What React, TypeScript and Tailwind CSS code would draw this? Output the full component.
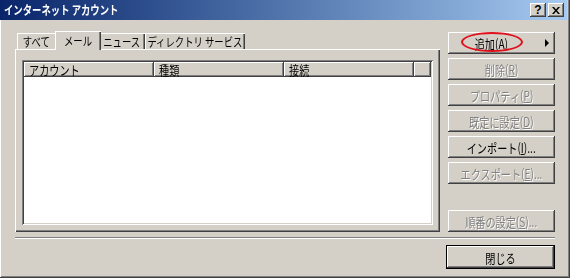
import React from "react";

const raised =
  "shadow-[inset_-1px_-1px_#404040,inset_1px_1px_#ffffff,inset_-2px_-2px_#808080,inset_2px_2px_#d4d0c8]";
const font = "[font-family:'Noto_Sans_CJK_JP','Noto_Sans',sans-serif]";

function N({ children, left }: { children: React.ReactNode; left?: boolean }) {
  return (
    <span
      className={`inline-block whitespace-nowrap scale-x-[0.78] ${left ? "origin-left" : "origin-center"}`}
    >
      {children}
    </span>
  );
}

function U({ c }: { c: string }) {
  return <span className="underline underline-offset-1">{c}</span>;
}

function Btn({
  children,
  disabled,
  className = "",
}: {
  children: React.ReactNode;
  disabled?: boolean;
  className?: string;
}) {
  return (
    <div
      className={`relative flex h-[22px] w-[107px] items-center justify-center bg-[#d4d0c8] text-[13px] leading-none ${raised} ${
        disabled ? "text-[#808080] [text-shadow:1px_1px_0_#ffffff]" : "text-black"
      } ${className}`}
    >
      {children}
    </div>
  );
}

function Tab({ label, w, selected }: { label: string; w: number; selected?: boolean }) {
  if (selected) {
    return (
      <div
        className="relative z-10 -mx-[2px] -mb-px flex h-[19px] items-start justify-center bg-[#d4d0c8] pt-[2px] text-[12px] leading-[15px] shadow-[inset_1px_1px_#ffffff,inset_-1px_0_#404040,inset_-2px_0_#808080]"
        style={{ width: w + 4 }}
      >
        <N>{label}</N>
      </div>
    );
  }
  return (
    <div
      className="flex h-[16px] items-start justify-center bg-[#d4d0c8] pr-[1px] pt-[1px] text-[12px] leading-[15px] shadow-[inset_1px_1px_#ffffff,inset_-1px_0_#404040,inset_-2px_0_#808080]"
      style={{ width: w }}
    >
      <N>{label}</N>
    </div>
  );
}

function HeaderCell({ label, w }: { label?: string; w?: number }) {
  return (
    <div
      className={`flex h-full items-center pl-[5px] text-[13px] leading-[13px] ${raised} ${w ? "" : "flex-1"}`}
      style={w ? { width: w } : undefined}
    >
      {label ? <N left>{label}</N> : null}
    </div>
  );
}

export default function App() {
  return (
    <div
      className={`relative h-[278px] w-[570px] overflow-hidden bg-[#d4d0c8] text-black ${font} shadow-[inset_-1px_-1px_#404040,inset_1px_0_#ffffff,inset_-2px_-2px_#808080]`}
    >
      {/* Title bar */}
      <div className="mr-[3px] flex h-[20px] items-center bg-gradient-to-r from-[#0a246a] to-[#a6caf0] pl-[4px] pr-[3px]">
        <span className="text-[12px] font-bold leading-none text-white">
          <N left>インターネット アカウント</N>
        </span>
        <div className="ml-auto flex gap-[2px]">
          <div className={`flex h-[14px] w-[16px] items-center justify-center bg-[#d4d0c8] ${raised}`}>
            <span className="text-[12px] font-bold leading-none [font-family:'Liberation_Sans',sans-serif]">?</span>
          </div>
          <div className={`flex h-[14px] w-[16px] items-center justify-center bg-[#d4d0c8] ${raised}`}>
            <svg width="8" height="7" viewBox="0 0 8 7">
              <path d="M0 0h2l2 2.5L6 0h2L5 3.5 8 7H6L4 4.5 2 7H0l3-3.5z" fill="#000" />
            </svg>
          </div>
        </div>
      </div>

      {/* Main row */}
      <div className="flex px-[15px] pt-[12px]">
        {/* Left: tabs + panel */}
        <div className="flex h-[200px] w-[425px] flex-col">
          <div className="flex h-[17px] items-end pl-[2px]">
            <Tab label="すべて" w={40} />
            <Tab label="メール" w={42} selected />
            <Tab label="ニュース" w={46} />
            <Tab label="ディレクトリ サービス" w={100} />
          </div>
          <div className="flex flex-1 flex-col px-[7px] pb-[7px] pt-[11px] shadow-[inset_1px_1px_#ffffff,inset_-1px_-1px_#404040,inset_-2px_-2px_#808080]">
            <div className="flex flex-1 flex-col bg-white p-[2px] shadow-[inset_1px_1px_#808080,inset_-1px_-1px_#ffffff,inset_2px_2px_#404040,inset_-2px_-2px_#d4d0c8]">
              <div className="flex h-[15px] bg-[#d4d0c8]">
                <HeaderCell label="アカウント" w={130} />
                <HeaderCell label="種類" w={130} />
                <HeaderCell label="接続" w={130} />
                <HeaderCell />
              </div>
              <div className="flex-1 bg-white" />
            </div>
          </div>
        </div>

        {/* Right: buttons */}
        <div className="ml-[8px] flex flex-col">
          <Btn>
            <span className="pr-[20px]">
              <N>
                追加(<U c="A" />)
              </N>
            </span>
            <div className="absolute left-[13px] top-0 h-[20px] w-[62px] rounded-[50%] border-2 border-[#e0101a]" />
            <svg className="absolute right-[5px] top-[7px]" width="5" height="8" viewBox="0 0 5 8">
              <path d="M0 0L4 4L0 8Z" fill="#000" />
            </svg>
          </Btn>
          <Btn disabled className="mt-[4px]">
            <N>
              削除(<U c="R" />)
            </N>
          </Btn>
          <Btn disabled className="mt-[4px]">
            <N>
              プロパティ(<U c="P" />)
            </N>
          </Btn>
          <Btn disabled className="mt-[4px]">
            <N>
              既定に設定(<U c="D" />)
            </N>
          </Btn>
          <Btn className="mt-[4px]">
            <N>
              インポート(<U c="I" />)...
            </N>
          </Btn>
          <Btn disabled className="mt-[4px]">
            <N>
              エクスポート(<U c="E" />)...
            </N>
          </Btn>
          <Btn disabled className="mt-auto">
            <N>
              順番の設定(<U c="S" />)...
            </N>
          </Btn>
        </div>
      </div>

      {/* Separator */}
      <div className="mx-[15px] mt-[5px] h-[2px] border-t border-b border-t-[#808080] border-b-white" />

      {/* Close */}
      <div className="flex justify-end px-[15px] pt-[6px]">
        <div className="border border-black">
          <Btn className="h-[20px] w-[105px]">
            <N>閉じる</N>
          </Btn>
        </div>
      </div>
    </div>
  );
}
